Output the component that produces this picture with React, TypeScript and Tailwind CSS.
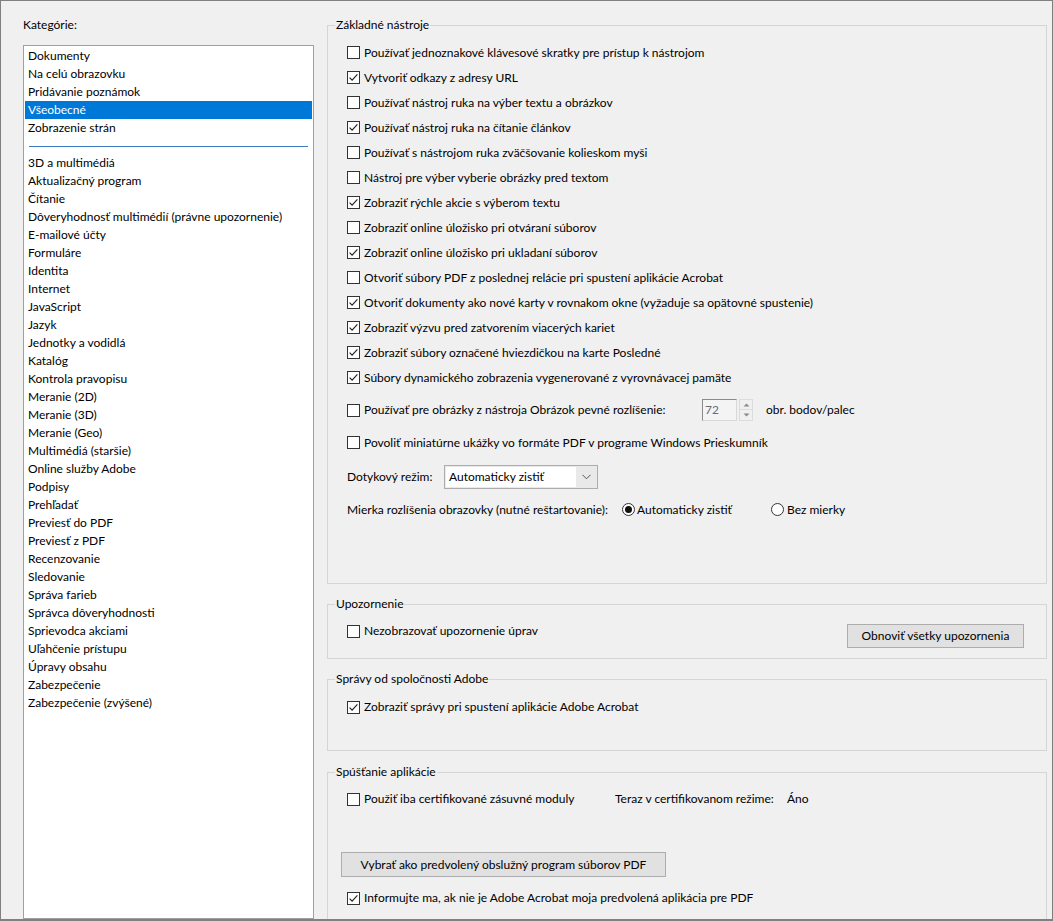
import React from "react";

const Check = ({ checked }: { checked?: boolean }) => (
  <svg width="13" height="13" viewBox="0 0 13 13" className="shrink-0">
    <rect x="0.5" y="0.5" width="12" height="12" fill="#ffffff" stroke="#333333" />
    {checked && (
      <path d="M2.6 6.6 L5.1 9.2 L10.4 3.4" fill="none" stroke="#222222" strokeWidth="1.15" />
    )}
  </svg>
);

const Radio = ({ checked }: { checked?: boolean }) => (
  <svg width="13" height="13" viewBox="0 0 13 13" className="shrink-0">
    <circle cx="6.5" cy="6.5" r="6" fill="#ffffff" stroke="#333333" />
    {checked && <circle cx="6.5" cy="6.5" r="3.5" fill="#111111" />}
  </svg>
);

const CheckLabel = ({ checked, text }: { checked?: boolean; text: string }) => (
  <div className="flex items-center h-[16px]">
    <Check checked={checked} />
    <span className="ml-[4px] whitespace-nowrap">{text}</span>
  </div>
);

const CheckRow = ({ checked, text }: { checked?: boolean; text: string }) => (
  <div className="flex items-center h-[25px]">
    <Check checked={checked} />
    <span className="ml-[4px] whitespace-nowrap">{text}</span>
  </div>
);

const topItems = ["Dokumenty", "Na celú obrazovku", "Pridávanie poznámok", "Všeobecné", "Zobrazenie strán"];
const items = [
  "3D a multimédiá",
  "Aktualizačný program",
  "Čítanie",
  "Dôveryhodnosť multimédií (právne upozornenie)",
  "E-mailové účty",
  "Formuláre",
  "Identita",
  "Internet",
  "JavaScript",
  "Jazyk",
  "Jednotky a vodidlá",
  "Katalóg",
  "Kontrola pravopisu",
  "Meranie (2D)",
  "Meranie (3D)",
  "Meranie (Geo)",
  "Multimédiá (staršie)",
  "Online služby Adobe",
  "Podpisy",
  "Prehľadať",
  "Previesť do PDF",
  "Previesť z PDF",
  "Recenzovanie",
  "Sledovanie",
  "Správa farieb",
  "Správca dôveryhodnosti",
  "Sprievodca akciami",
  "Uľahčenie prístupu",
  "Úpravy obsahu",
  "Zabezpečenie",
  "Zabezpečenie (zvýšené)",
];

const basic: [boolean, string][] = [
  [false, "Používať jednoznakové klávesové skratky pre prístup k nástrojom"],
  [true, "Vytvoriť odkazy z adresy URL"],
  [false, "Používať nástroj ruka na výber textu a obrázkov"],
  [true, "Používať nástroj ruka na čítanie článkov"],
  [false, "Používať s nástrojom ruka zväčšovanie kolieskom myši"],
  [false, "Nástroj pre výber vyberie obrázky pred textom"],
  [true, "Zobraziť rýchle akcie s výberom textu"],
  [false, "Zobraziť online úložisko pri otváraní súborov"],
  [true, "Zobraziť online úložisko pri ukladaní súborov"],
  [false, "Otvoriť súbory PDF z poslednej relácie pri spustení aplikácie Acrobat"],
  [true, "Otvoriť dokumenty ako nové karty v rovnakom okne (vyžaduje sa opätovné spustenie)"],
  [true, "Zobraziť výzvu pred zatvorením viacerých kariet"],
  [true, "Zobraziť súbory označené hviezdičkou na karte Posledné"],
  [true, "Súbory dynamického zobrazenia vygenerované z vyrovnávacej pamäte"],
];

const Legend = ({ children }: { children: React.ReactNode }) => (
  <legend className="ml-[7px] px-[1px] leading-[16px]">{children}</legend>
);

export default function App() {
  return (
    <div className="w-[1053px] h-[921px] bg-[#f0f0f0] border-t border-l border-r border-b-2 border-[#808080] overflow-hidden flex text-[12px] leading-[16px] text-black font-['Lato','Segoe_UI',sans-serif]">
      {/* Left column */}
      <div className="ml-[22px] w-[291px] pt-[16px] flex flex-col shrink-0">
        <div className="h-[16px] whitespace-nowrap">Kategórie:</div>
        <div className="mt-[12px] h-[890px] bg-white border border-[#a0a0a0] p-[1px]">
          {topItems.map((t) => (
            <div
              key={t}
              className={
                t === "Všeobecné"
                  ? "h-[18px] pl-[3px] flex items-center bg-[#0078d7] text-white whitespace-nowrap"
                  : "h-[18px] pl-[3px] flex items-center whitespace-nowrap"
              }
            >
              {t}
            </div>
          ))}
          <div className="h-[17px] flex items-start">
            <div className="mt-[9px] mx-[4px] h-[1px] flex-1 bg-[#3b7cc0]" />
          </div>
          {items.map((t) => (
            <div key={t} className="h-[18px] pl-[3px] flex items-center whitespace-nowrap">
              {t}
            </div>
          ))}
        </div>
      </div>

      {/* Right column */}
      <div className="ml-[13px] w-[720px] pt-[16px] flex flex-col shrink-0">
        {/* Základné nástroje */}
        <fieldset className="border border-[#d5d5d5] p-0 m-0 min-w-0">
          <Legend>Základné nástroje</Legend>
          <div className="pl-[19px] pt-[7px] pb-[61px]">
            {basic.map(([c, t]) => (
              <CheckRow key={t} checked={c} text={t} />
            ))}
            <div className="mt-[9px] h-[22px] flex items-center">
              <div className="w-[355px] flex items-center">
                <Check />
                <span className="ml-[4px] whitespace-nowrap">
                  Používať pre obrázky z nástroja Obrázok pevné rozlíšenie:
                </span>
              </div>
              <div className="w-[35px] h-[22px] bg-[#f4f4f4] border-t border-l border-[#8a8a8a] border-r border-b border-r-[#d8d8d8] border-b-[#d8d8d8] flex items-center pl-[2px] text-[#6d6d6d]">
                72
              </div>
              <div className="ml-[2px] w-[14px] h-[22px] flex flex-col">
                <div className="h-[11px] bg-[#f0f0f0] border border-[#dcdcdc] flex items-center justify-center">
                  <svg width="7" height="4" viewBox="0 0 7 4">
                    <path d="M0.5 3.5 L3.5 0.5 L6.5 3.5 Z" fill="#8a8a8a" />
                  </svg>
                </div>
                <div className="h-[11px] bg-[#f0f0f0] border border-t-0 border-[#dcdcdc] flex items-center justify-center">
                  <svg width="7" height="4" viewBox="0 0 7 4">
                    <path d="M0.5 0.5 L3.5 3.5 L6.5 0.5 Z" fill="#8a8a8a" />
                  </svg>
                </div>
              </div>
              <span className="ml-[13px] whitespace-nowrap">obr. bodov/palec</span>
            </div>
            <div className="mt-[9px]">
              <CheckRow text="Povoliť miniatúrne ukážky vo formáte PDF v programe Windows Prieskumník" />
            </div>
            <div className="mt-[10px] h-[24px] flex items-center">
              <div className="w-[97px] whitespace-nowrap">Dotykový režim:</div>
              <div className="w-[154px] h-[24px] border border-[#adadad] bg-[#e9e9e9] flex items-center p-[1px]">
                <div className="flex-1 h-full bg-white flex items-center pl-[3px] whitespace-nowrap">
                  Automaticky zistiť
                </div>
                <div className="w-[20px] h-full flex items-center justify-center">
                  <svg width="9" height="6" viewBox="0 0 9 6">
                    <path d="M0.5 0.8 L4.5 4.8 L8.5 0.8" fill="none" stroke="#555555" strokeWidth="1" />
                  </svg>
                </div>
              </div>
            </div>
            <div className="mt-[8px] h-[25px] flex items-center">
              <div className="w-[275px] whitespace-nowrap">Mierka rozlíšenia obrazovky (nutné reštartovanie):</div>
              <div className="w-[149px] flex items-center">
                <Radio checked />
                <span className="ml-[2px] whitespace-nowrap">Automaticky zistiť</span>
              </div>
              <div className="flex items-center">
                <Radio />
                <span className="ml-[3px] whitespace-nowrap">Bez mierky</span>
              </div>
            </div>
          </div>
        </fieldset>

        {/* Upozornenie */}
        <fieldset className="mt-[12px] border border-[#d5d5d5] p-0 m-0 min-w-0">
          <Legend>Upozornenie</Legend>
          <div className="pl-[19px] pr-[22px] pt-[11px] pb-[10px] flex items-start justify-between">
            <CheckLabel text="Nezobrazovať upozornenie úprav" />
            <div className="mt-[1px] w-[177px] h-[24px] bg-[#e1e1e1] border border-[#adadad] flex items-center justify-center whitespace-nowrap">
              Obnoviť všetky upozornenia
            </div>
          </div>
        </fieldset>

        {/* Správy od spoločnosti Adobe */}
        <fieldset className="mt-[12px] border border-[#d5d5d5] p-0 m-0 min-w-0">
          <Legend>Správy od spoločnosti Adobe</Legend>
          <div className="pl-[19px] pt-[12px] pb-[35px]">
            <CheckLabel checked text="Zobraziť správy pri spustení aplikácie Adobe Acrobat" />
          </div>
        </fieldset>

        {/* Spúšťanie aplikácie */}
        <fieldset className="mt-[13px] border border-[#d5d5d5] p-0 m-0 min-w-0">
          <Legend>Spúšťanie aplikácie</Legend>
          <div className="pl-[19px] pt-[11px] pb-[40px] flex flex-col">
            <div className="flex items-center h-[16px]">
              <div className="w-[268px]">
                <CheckLabel text="Použiť iba certifikované zásuvné moduly" />
              </div>
              <div className="w-[172px] whitespace-nowrap">Teraz v certifikovanom režime:</div>
              <div className="whitespace-nowrap">Áno</div>
            </div>
            <div className="mt-[45px] ml-[-6px] w-[325px] h-[25px] bg-[#e1e1e1] border border-[#adadad] flex items-center justify-center whitespace-nowrap">
              Vybrať ako predvolený obslužný program súborov PDF
            </div>
            <div className="mt-[13px]">
              <CheckLabel checked text="Informujte ma, ak nie je Adobe Acrobat moja predvolená aplikácia pre PDF" />
            </div>
          </div>
        </fieldset>
      </div>
    </div>
  );
}
